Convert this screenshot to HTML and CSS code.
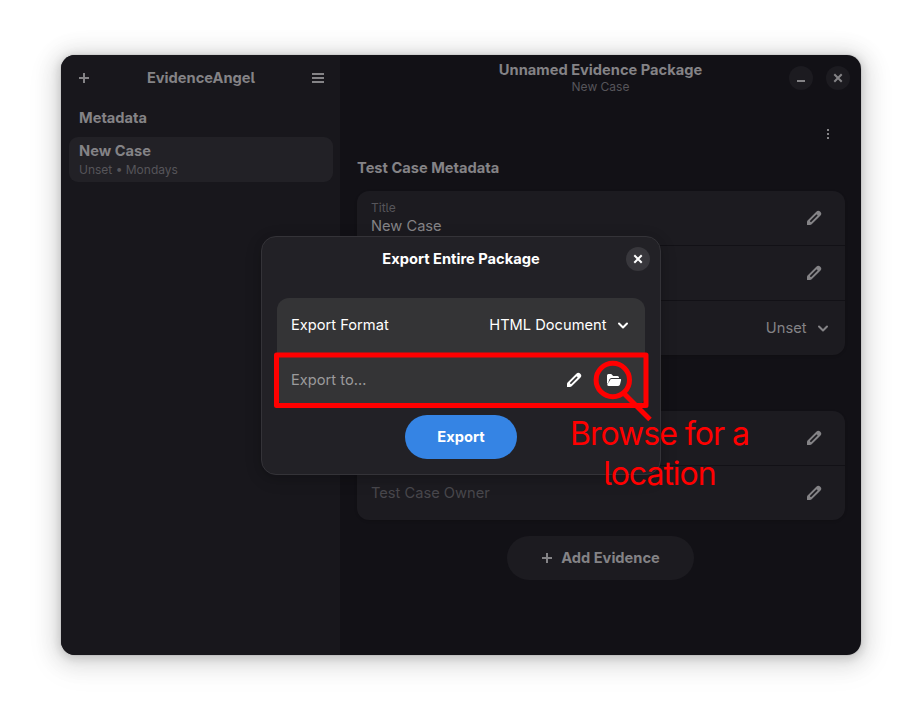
FILE: index.html
```html
<!DOCTYPE html>
<html lang="en">
<head>
<meta charset="utf-8">
<title>EvidenceAngel</title>
<link rel="stylesheet" href="styles.css">
</head>
<body>
<svg class="defs" width="0" height="0">
  <symbol id="pencil" viewBox="0 0 16 16"><path fill="currentColor" fill-rule="evenodd" d="M10.300 1.700a2.800 2.800 0 0 1 4 4L5.700 14.200a2.600 2.600 0 0 1-1.800.8H1v-2.900a2.600 2.600 0 0 1 .8-1.800zM10.300 4.600 4.300 10.500a.8.8 0 0 0 1.200 1.200L11.400 5.700a.8.8 0 0 0-1.100-1.100z"/></symbol>
  <symbol id="chevron" viewBox="0 0 16 16"><path d="M4 6.500 8 10.500 12 6.500" fill="none" stroke="currentColor" stroke-width="2" stroke-linecap="round" stroke-linejoin="round"/></symbol>
  <symbol id="plus" viewBox="0 0 16 16"><path d="M8 3v10M3 8h10" fill="none" stroke="currentColor" stroke-width="2"/></symbol>
  <symbol id="close" viewBox="0 0 16 16"><path d="M5 5l6 6M11 5l-6 6" fill="none" stroke="currentColor" stroke-width="2" stroke-linecap="square"/></symbol>
  <symbol id="folder" viewBox="0 0 16 16"><path fill="currentColor" d="M1 11.500V3.500A1.500 1.500 0 0 1 2.500 2h2.700L7.200 4H11.500A1.500 1.500 0 0 1 13 5.500V6H5.500A2.300 2.300 0 0 0 3.300 7.600L2 11.500z"/><path fill="currentColor" d="M5.500 7h8.800a.8.8 0 0 1 .8 1l-1.100 4.500a2 2 0 0 1-1.900 1.500H2.500A1.500 1.500 0 0 1 1.200 12.400L4 8.200A1.700 1.700 0 0 1 5.500 7z"/></symbol>
</svg>
<div class="window">
  <aside class="sidebar">
    <header class="side-header">
      <svg class="icon"><use href="#plus"/></svg>
      <span class="bold">EvidenceAngel</span>
      <svg class="icon" viewBox="0 0 16 16"><path d="M2 4h12M2 8h12M2 12h12" stroke="currentColor" stroke-width="2"/></svg>
    </header>
    <h2 class="side-heading">Metadata</h2>
    <div class="case">
      <div class="bold">New Case</div>
      <div class="small">Unset • Mondays</div>
    </div>
  </aside>
  <main class="main">
    <header class="main-header">
      <div class="titles">
        <div class="bold">Unnamed Evidence Package</div>
        <div class="small">New Case</div>
      </div>
      <div class="controls">
        <span class="round"><svg class="icon" viewBox="0 0 16 16"><path d="M4 11h8" stroke="currentColor" stroke-width="2"/></svg></span>
        <span class="round"><svg class="icon"><use href="#close"/></svg></span>
      </div>
    </header>
    <div class="toolbar"><svg class="icon" viewBox="0 0 16 16"><path d="M7 3h2v2H7zM7 7h2v2H7zM7 11h2v2H7z" fill="currentColor"/></svg></div>
    <h2 class="heading">Test Case Metadata</h2>
    <section class="card">
      <div class="row"><div class="field"><div class="small">Title</div><div class="value">New Case</div></div><svg class="icon edit"><use href="#pencil"/></svg></div>
      <div class="row"><svg class="icon edit"><use href="#pencil"/></svg></div>
      <div class="row"><span class="select">Unset<svg class="icon"><use href="#chevron"/></svg></span></div>
    </section>
    <section class="card second">
      <div class="row"><svg class="icon edit"><use href="#pencil"/></svg></div>
      <div class="row"><span class="placeholder">Test Case Owner</span><svg class="icon edit"><use href="#pencil"/></svg></div>
    </section>
    <div class="add"><svg class="icon"><use href="#plus"/></svg><span>Add Evidence</span></div>
  </main>
</div>
<div class="dialog">
  <header class="dialog-header"><span class="bold">Export Entire Package</span><span class="round dialog-close"><svg class="icon"><use href="#close"/></svg></span></header>
  <div class="options">
    <div class="row"><span>Export Format</span><span class="select">HTML Document<svg class="icon"><use href="#chevron"/></svg></span></div>
    <div class="row"><span class="placeholder">Export to…</span><span class="actions"><svg class="icon"><use href="#pencil"/></svg><svg class="icon"><use href="#folder"/></svg></span></div>
  </div>
  <div class="export">Export</div>
</div>
<svg class="marks" viewBox="0 0 922 722" fill="none" stroke="#f00" stroke-width="5">
  <rect x="276.500" y="355" width="369.500" height="50.500" stroke-linejoin="round"/>
  <circle cx="612.800" cy="380" r="16.700"/>
  <path d="M624.500 394 650 419.500"/>
</svg>
<div class="note">Browse for a<br>location</div>
</body>
</html>
```
FILE: styles.css
```css
* { box-sizing: border-box; }
body {
  margin: 0;
  width: 922px;
  height: 722px;
  padding: 55px 61px;
  overflow: hidden;
  position: relative;
  background: #fff;
  font: 14.667px/18px Inter, sans-serif;
  font-feature-settings: "cv05";
}
.defs { position: absolute; }
.icon { width: 16px; height: 16px; display: block; flex: none; }
.bold { font-weight: 700; }
.small { font-size: 12px; line-height: 15px; color: #56555a; }
.window {
  display: flex;
  width: 800px;
  height: 600px;
  border-radius: 14px;
  overflow: hidden;
  color: #848386;
  background: #121116;
  box-shadow: 0 2px 8px 2px rgba(0,0,0,.13), 0 3px 20px 9px rgba(0,0,0,.09), 0 6px 30px 12px rgba(0,0,0,.04), 0 0 0 1px rgba(0,0,0,.05);
}
.sidebar { width: 279px; background: #18171c; padding: 0 7px 0 8px; }
.side-header { display: flex; align-items: center; justify-content: space-between; height: 46px; padding: 0 7px; }
.side-heading, .heading { margin: 0; font-size: 14.667px; line-height: 18px; font-weight: 700; }
.side-heading { padding: 8px 10px 10px; }
.case { height: 45px; border-radius: 9px; background: #222126; padding: 5px 10px; }
.case .small { margin-top: 2px; }
.main { width: 521px; padding: 0 16px 0 17px; }
.main-header { display: grid; grid-template-columns: 1fr auto 1fr; height: 46px; margin: 0 -5px 0 0; padding-top: 6px; }
.titles { grid-column: 2; text-align: center; padding-right: 6px; }
.controls { display: flex; justify-content: flex-end; gap: 13px; padding-top: 5px; }
.round { width: 24px; height: 24px; border-radius: 50%; background: #1c1b20; display: flex; align-items: center; justify-content: center; }
.toolbar { display: flex; justify-content: flex-end; height: 58px; padding: 25px 9px 0 0; }
.heading { margin-bottom: 14px; }
.card { border-radius: 12px; background: #1c1b20; box-shadow: 0 1px 3px rgba(0,0,0,.15); }
.row { display: flex; align-items: center; justify-content: space-between; height: 55px; padding: 0 14px; }
.card .row + .row { border-top: 1px solid #121116; }
.card .row:first-child { height: 54px; }
.edit { margin: 0 9px 0 auto; }
.field { padding-bottom: 2px; }
.value { margin-top: 2px; }
.select { display: flex; align-items: center; gap: 8.5px; margin-left: auto; }
.second { margin-top: 56px; }
.card .placeholder { color: #48474c; }
.add { display: flex; align-items: center; justify-content: center; gap: 6px; width: 187px; height: 44px; margin: 16px auto 0 150px; padding-right: 2px; border-radius: 22px; background: #1c1b20; font-weight: 700; }
.dialog {
  position: absolute;
  left: 261px;
  top: 236px;
  width: 400px;
  height: 239px;
  border: 1px solid #343338;
  border-radius: 15px;
  background: #222126;
  color: #fff;
  padding: 0 15px;
  box-shadow: 0 2px 8px rgba(0,0,0,.12), 0 4px 18px rgba(0,0,0,.12);
}
.dialog-header { display: grid; grid-template-columns: 1fr auto 1fr; align-items: center; height: 44px; margin: 0 -5px 17px; }
.dialog-header .bold { grid-column: 2; }
.dialog-close { background: #38373c; justify-self: end; }
.options { height: 109px; border-radius: 12px; background: #343436; }
.options .row:first-child { height: 54px; }
.options .placeholder { color: #9b9b9c; }
.actions { display: flex; gap: 24px; padding-right: 9px; }
.export { width: 112px; height: 44px; margin: 8px auto 0; border-radius: 22px; background: #3584e4; font-weight: 700; line-height: 44px; text-align: center; }
.marks { position: absolute; left: 0; top: 0; width: 922px; height: 722px; }
.note { position: absolute; left: 559.5px; top: 414px; width: 200px; font-size: 32px; font-weight: 400; letter-spacing: -1px; line-height: 40px; color: #f00; text-align: center; }
```
